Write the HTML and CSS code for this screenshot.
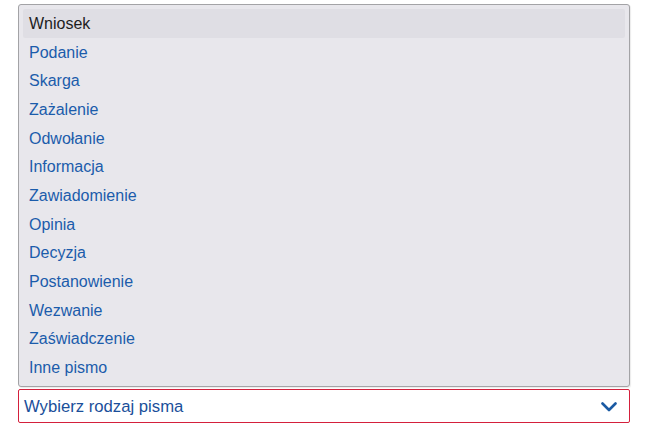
FILE: index.html
```html
<!DOCTYPE html>
<html lang="pl">
<head>
<meta charset="utf-8">
<title>Rodzaj pisma</title>
<link rel="stylesheet" href="styles.css">
</head>
<body>
<div class="field">
  <ul class="listbox">
    <li class="opt opt-active">Wniosek</li>
    <li class="opt">Podanie</li>
    <li class="opt">Skarga</li>
    <li class="opt">Zażalenie</li>
    <li class="opt">Odwołanie</li>
    <li class="opt">Informacja</li>
    <li class="opt">Zawiadomienie</li>
    <li class="opt">Opinia</li>
    <li class="opt">Decyzja</li>
    <li class="opt">Postanowienie</li>
    <li class="opt">Wezwanie</li>
    <li class="opt">Zaświadczenie</li>
    <li class="opt">Inne pismo</li>
  </ul>
  <div class="select">
    <span class="select-label">Wybierz rodzaj pisma</span>
    <svg class="chevron" width="16" height="10" viewBox="0 0 16 10"><path d="M1.5 1.5 L8 8 L14.5 1.5" fill="none" stroke="#1a5aa3" stroke-width="2.6" stroke-linecap="round" stroke-linejoin="round"/></svg>
  </div>
</div>
</body>
</html>
```
FILE: styles.css
```css
html, body {
  margin: 0;
  padding: 0;
  background: #ffffff;
}
body {
  font-family: "Liberation Sans", Arial, sans-serif;
  font-size: 16px;
}
.field {
  width: 612px;
  margin: 4px 0 0 18px;
  display: flex;
  flex-direction: column;
  gap: 2px;
}
.listbox {
  list-style: none;
  margin: 0;
  padding: 4px;
  background: #e8e7ec;
  border: 1px solid #a3a3a6;
  border-radius: 3px;
  box-shadow: 1px 1px 1px rgba(0,0,0,0.08);
}
.opt {
  height: 28.7px;
  display: flex;
  align-items: center;
  padding: 1px 0 0 6px;
  box-sizing: border-box;
  color: #1b5cab;
  border-radius: 2px;
}
.opt-active {
  background: #dfdee4;
  color: #1d1d1f;
}
.select {
  height: 30px;
  border: 1px solid #d4203c;
  border-radius: 2px;
  background: #ffffff;
  display: flex;
  align-items: center;
  justify-content: space-between;
  padding: 2px 12px 0 5px;
}
.select-label {
  color: #1a4f9a;
  font-size: 16.7px;
}
.chevron {
  display: block;
}
```
